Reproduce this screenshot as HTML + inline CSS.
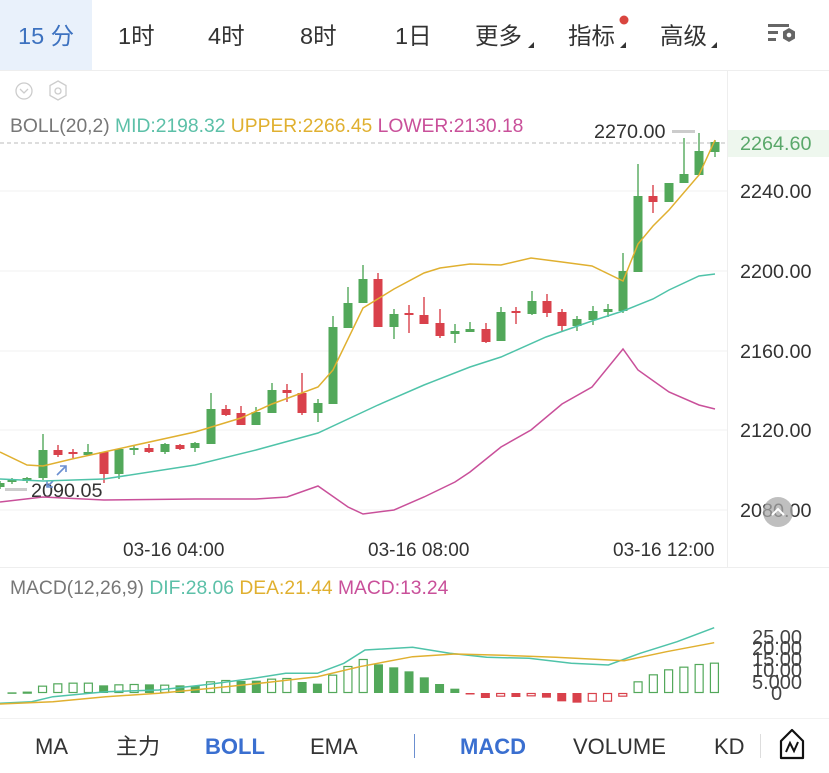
<!DOCTYPE html>
<html><head><meta charset="utf-8"><style>
html,body{margin:0;padding:0;background:#fff;width:829px;height:773px;overflow:hidden;font-family:"Liberation Sans","Noto Sans CJK SC",sans-serif}
svg{position:absolute;left:0;top:0}
</style></head><body>
<svg id="s" width="829" height="773" xmlns="http://www.w3.org/2000/svg" font-family="Liberation Sans, Noto Sans CJK SC, sans-serif">
<rect x="0" y="0" width="92" height="70" fill="#e9f1fb"/>
<line x1="0" y1="70.5" x2="829" y2="70.5" stroke="#eee"/>
<g font-size="23.5" fill="#333" dominant-baseline="central">
<text x="18" y="36" fill="#3d72c0">15 分</text>
<text x="118" y="36">1时</text>
<text x="208" y="36">4时</text>
<text x="300" y="36">8时</text>
<text x="395" y="36">1日</text>
<text x="475" y="36">更多</text>
<text x="568" y="36">指标</text>
<text x="660" y="36">高级</text>
</g>
<g fill="#333"><path d="M528 48l6-6v6z"/><path d="M620 48l6-6v6z"/><path d="M711 48l6-6v6z"/></g>
<circle cx="624" cy="20" r="4.5" fill="#d9453f"/>
<g fill="#666"><rect x="768" y="24" width="21" height="3"/><rect x="768" y="31" width="10" height="3"/><rect x="768" y="38" width="8" height="3"/>
<path d="M789 28l6 3.5v7l-6 3.5-6-3.5v-7z"/></g><circle cx="789" cy="35" r="2.3" fill="#fff"/>
<line x1="727.5" y1="71" x2="727.5" y2="567" stroke="#eee"/>
<circle cx="24" cy="91" r="8" fill="none" stroke="#ccc" stroke-width="1.3"/><path d="M20 89l4 4 4-4" fill="none" stroke="#ccc" stroke-width="1.3"/>
<path d="M58 81l8 4.5v10l-8 4.5-8-4.5v-10z" fill="none" stroke="#ccc" stroke-width="1.3"/><circle cx="58" cy="91" r="3" fill="none" stroke="#ccc" stroke-width="1.3"/>
<text x="10" y="132" font-size="19.3"><tspan fill="#777">BOLL(20,2) </tspan><tspan fill="#5cc0a8">MID:2198.32 </tspan><tspan fill="#e0b030">UPPER:2266.45 </tspan><tspan fill="#c9509a">LOWER:2130.18</tspan></text>
<g stroke="#f0f0f0"><line x1="0" y1="191" x2="727" y2="191"/><line x1="0" y1="271" x2="727" y2="271"/><line x1="0" y1="351" x2="727" y2="351"/><line x1="0" y1="430" x2="727" y2="430"/><line x1="0" y1="510" x2="727" y2="510"/></g>
<line x1="0" y1="143" x2="727" y2="143" stroke="#bbb" stroke-dasharray="4 3"/>
<rect x="728" y="130" width="101" height="27" fill="#eef7ee"/>
<g font-size="19.8" fill="#333"><text x="740" y="150" fill="#5aa86a">2264.60</text><text x="740" y="198">2240.00</text><text x="740" y="278">2200.00</text><text x="740" y="358">2160.00</text><text x="740" y="437">2120.00</text><text x="740" y="517">2080.00</text>
<text x="594" y="138">2270.00</text><text x="31" y="497">2090.05</text></g>
<rect x="672" y="130" width="23" height="3" fill="#ccc"/><rect x="5" y="488" width="22" height="3" fill="#ccc"/>
<path d="M57 475l9-9M60 466h6v6M53 481l-6 6M47 481v6h6" stroke="#6b8fd0" stroke-width="1.6" fill="none"/>
<circle cx="778" cy="512" r="15" fill="#aaa" opacity="0.75"/><path d="M772 515l6-6 6 6" stroke="#fff" stroke-width="2" fill="none"/>
<g id="cd"></g>
<polyline fill="none" stroke="#e0b030" stroke-width="1.5" points="0,452 27,465 43,466 72,459 104,452 195,432 241,418 272,404 318,387 333,370 363,308 394,289 424,273 440,268 470,264 501,265 531,258 562,262 592,266 623,281 638,244 653,226 669,210 699,175 715,140"/>
<polyline fill="none" stroke="#4fc3a9" stroke-width="1.5" points="0,479 43,481 104,479 195,465 256,450 318,433 378,405 424,385 470,367 501,357 546,337 592,321 623,311 653,299 669,290 699,276 715,274"/>
<polyline fill="none" stroke="#c9509a" stroke-width="1.5" points="0,502 43,497 104,500 195,499 256,499 287,497 318,486 348,507 363,514 394,510 424,497 455,482 470,472 501,447 531,430 562,404 592,387 623,349 638,370 669,392 699,405 715,409"/>
<g font-size="19" fill="#333"><text x="123" y="556">03-16 04:00</text><text x="368" y="556">03-16 08:00</text><text x="613" y="556">03-16 12:00</text></g>
<line x1="0" y1="567.5" x2="829" y2="567.5" stroke="#eee"/>
<text x="10" y="594" font-size="19.3"><tspan fill="#777">MACD(12,26,9) </tspan><tspan fill="#5cc0a8">DIF:28.06 </tspan><tspan fill="#e0b030">DEA:21.44 </tspan><tspan fill="#c9509a">MACD:13.24</tspan></text>
<g id="mb"></g>
<polyline id="dif" fill="none" stroke="#4fc3a9" stroke-width="1.5"/>
<polyline id="dea" fill="none" stroke="#e0b030" stroke-width="1.5"/>
<g font-size="20" fill="#444"><text x="752" y="644">25.00</text><text x="752" y="655">20.00</text><text x="752" y="666">15.00</text><text x="752" y="677">10.00</text><text x="752" y="689">5.000</text><text x="771" y="700">0</text></g>
<line x1="0" y1="718.5" x2="829" y2="718.5" stroke="#f2f2f2"/>
<g font-size="22" fill="#333"><text x="35" y="754">MA</text><text x="116" y="754">主力</text><text x="205" y="754" fill="#3a6fd0" font-weight="bold">BOLL</text><text x="310" y="754">EMA</text>
<text x="460" y="754" fill="#3a6fd0" font-weight="bold">MACD</text><text x="573" y="754">VOLUME</text><text x="714" y="754">KD</text></g>
<line x1="414.5" y1="734" x2="414.5" y2="758" stroke="#6b8fd0" stroke-width="1"/>
<line x1="760.5" y1="734" x2="760.5" y2="758" stroke="#ddd"/>
<path d="M781 741l11-11 11 11v17h-22z" fill="none" stroke="#111" stroke-width="2.2" stroke-linejoin="round"/><path d="M786 752l4-9 4 8 4-9" fill="none" stroke="#111" stroke-width="2"/>
</svg>
<script>
var G="#52a85a",R="#d9414b",NS="http://www.w3.org/2000/svg";
var c=[[0,483,487,481,489,G],[12,480,482,478,484,G],[27,478,481,477,483,G],[43,450,478,434,480,G],[58,450,455,445,457,R],[73,452,454,449,458,R],[88,452,455,444,455,G],[104,452,474,452,483,R],[119,449,474,449,479,G],[134,448,450,445,455,G],[149,448,452,444,453,R],[165,444,452,443,454,G],[180,445,449,444,450,R],[195,443,448,442,452,G],[211,409,444,393,444,G],[226,409,415,405,416,R],[241,413,425,406,425,R],[256,412,425,407,425,G],[272,390,413,383,413,G],[287,390,393,384,402,R],[302,393,413,373,415,R],[318,403,413,399,422,G],[333,327,404,316,404,G],[348,303,328,287,328,G],[363,279,303,265,303,G],[378,279,327,273,327,R],[394,314,327,309,339,G],[409,313,315,305,333,R],[424,315,324,297,324,R],[440,323,336,309,338,R],[455,331,334,324,343,G],[470,329,332,322,332,G],[486,329,342,323,343,R],[501,312,341,307,341,G],[516,311,313,307,324,R],[532,301,314,291,315,G],[547,301,313,294,317,R],[562,312,326,309,332,R],[577,319,326,316,331,G],[593,311,320,306,325,G],[608,309,312,304,317,G],[623,271,311,253,313,G],[638,196,272,164,272,G],[653,196,202,185,213,R],[669,183,202,183,202,G],[684,174,183,138,183,G],[699,151,175,133,175,G],[715,142,152,140,157,G]];
var g=document.getElementById("cd");
function el(t,a,p){var e=document.createElementNS(NS,t);for(var k in a)e.setAttribute(k,a[k]);p.appendChild(e);return e;}
c.forEach(function(d){el("line",{x1:d[0],x2:d[0],y1:d[3],y2:d[4],stroke:d[5],"stroke-width":1.4},g);el("rect",{x:d[0]-4.5,y:d[1],width:9,height:Math.max(1.5,d[2]-d[1]),fill:d[5]},g);});
var zx=[20,50,80,110,140,167,197,225,255,285,312,340,370,400,428,457,487,515,543,572,600,630,658,688,716,745,774,803,832,860,890,918,947,975,1005,1033,1062,1092,1120,1150,1178,1207,1236,1265,1293,1322,1350];
var zt=[397,395,377,370,368,368,376,373,372,373,374,376,377,364,360,363,362,356,354,366,371,344,318,297,313,322,334,352,372,386,400,414,410,411,409,413,424,428,425,425,410,364,343,328,320,312,308];
var zf=[1,0,0,0,0,0,1,0,0,1,0,1,1,0,0,1,1,0,0,1,1,0,0,0,1,1,1,1,1,1,1,1,0,1,0,1,1,1,0,0,0,0,0,0,0,0,0];
var mb=document.getElementById("mb"),base=693;
for(var i=0;i<zx.length;i++){var x=12+i*15.27,t=560+zt[i]/3,col=t>base?R:G;var y1=Math.min(t,base),h=Math.max(1.5,Math.abs(t-base));
if(zf[i])el("rect",{x:x-4.5,y:y1,width:9,height:h,fill:col},mb);else el("rect",{x:x-4,y:y1+0.5,width:8,height:Math.max(1,h-1),fill:"none",stroke:col,"stroke-width":1.2},mb);}
function pl(id,a){document.getElementById(id).setAttribute("points",a.map(function(p){return (p[0]*0.529).toFixed(1)+","+(560+p[1]/3).toFixed(1)}).join(" "));}
pl("dif",[[0,430],[60,425],[100,410],[200,395],[300,390],[400,372],[480,355],[540,340],[600,340],[650,310],[690,270],[780,262],[850,280],[920,292],[1000,295],[1080,310],[1150,315],[1210,280],[1280,245],[1350,203]]);
pl("dea",[[0,432],[100,425],[200,410],[300,400],[400,385],[500,368],[600,350],[680,320],[780,290],[860,282],[950,286],[1050,292],[1180,302],[1260,275],[1350,248]]);
</script>
</body></html>
